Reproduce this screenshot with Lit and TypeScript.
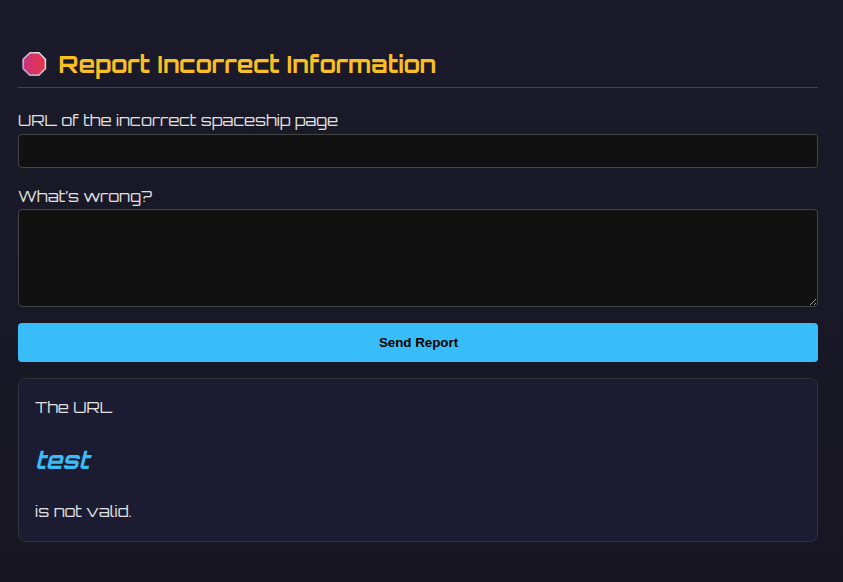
import { LitElement, html, css } from "lit";
import { customElement } from "lit/decorators.js";

@customElement("app-root")
export class AppRoot extends LitElement {
  static styles = css`
    :host {
      display: block;
      box-sizing: border-box;
      height: 582px;
      padding: 47px 25px 0 18px;
      overflow: hidden;
      background: linear-gradient(#1a1a2a, #181622);
      color: #e0e0e0;
      font: 16px/20px Orbitron, Inter, "Liberation Sans", sans-serif;
    }
    h2 {
      display: flex;
      align-items: center;
      gap: 10.6px;
      box-sizing: border-box;
      height: 41px;
      margin: 0 0 22px;
      padding: 0 0 6px 4px;
      border-bottom: 1px solid #444;
      color: #fbbf24;
      font-size: 24px;
      line-height: 32px;
      font-weight: 700;
    }
    svg.stop { width: 26px; height: 26px; flex: none; }
    label { display: block; height: 20px; margin-bottom: 4px; }
    .field {
      display: block;
      box-sizing: border-box;
      width: 100%;
      margin: 0;
      background: #111;
      border: 1px solid #444;
      border-radius: 4px;
      color: #fff;
      outline: none;
    }
    input.field { height: 34px; margin-bottom: 18px; }
    textarea.field { height: 98px; margin-bottom: 16px; resize: vertical; }
    .second { margin-bottom: 3px; }
    button {
      display: block;
      width: 100%;
      height: 39px;
      padding: 0 0 0 1px;
      margin-bottom: 16px;
      border: 0;
      border-radius: 4px;
      background: #38bdf8;
      color: #000;
      font: bold 13.333px "Liberation Sans", sans-serif;
    }
    .result {
      box-sizing: border-box;
      height: 164px;
      padding: 18px 16px;
      border: 1px solid #333;
      border-radius: 8px;
      background: #1b1b32;
    }
    .result p { margin: 0; height: 20px; }
    .result h3 {
      margin: 26px 0 24px;
      height: 34px;
      color: #38bdf8;
      font-size: 24px;
      line-height: 34px;
      font-weight: 700;
      font-style: italic;
    }
  `;

  render() {
    return html`
      <h2>
        <svg class="stop" viewBox="0 0 26 26">
          <defs>
            <linearGradient id="fill"><stop stop-color="#ca3080" /><stop offset="1" stop-color="#e63645" /></linearGradient>
            <linearGradient id="rim" x1="0" y1="1" x2="1" y2="0"><stop stop-color="#a891a5" /><stop offset="1" stop-color="#f5edf3" /></linearGradient>
          </defs>
          <path d="M7.8 1H17.2L24.2 8V18L17.2 25H7.3L0.3 18V8Z" fill="url(#rim)" />
          <path d="M8.4 2.6H16.7L22.6 8.6V17.3L16.7 23.3H8.1L2.1 17.3V8.6Z" fill="url(#fill)" />
        </svg>
        <span>Report Incorrect Information</span>
      </h2>
      <label for="url">URL of the incorrect spaceship page</label>
      <input class="field" id="url" type="text" />
      <label class="second" for="wrong">What’s wrong?</label>
      <textarea class="field" id="wrong"></textarea>
      <button type="button">Send Report</button>
      <div class="result">
        <p>The URL</p>
        <h3>test</h3>
        <p>is not valid.</p>
      </div>
    `;
  }
}
